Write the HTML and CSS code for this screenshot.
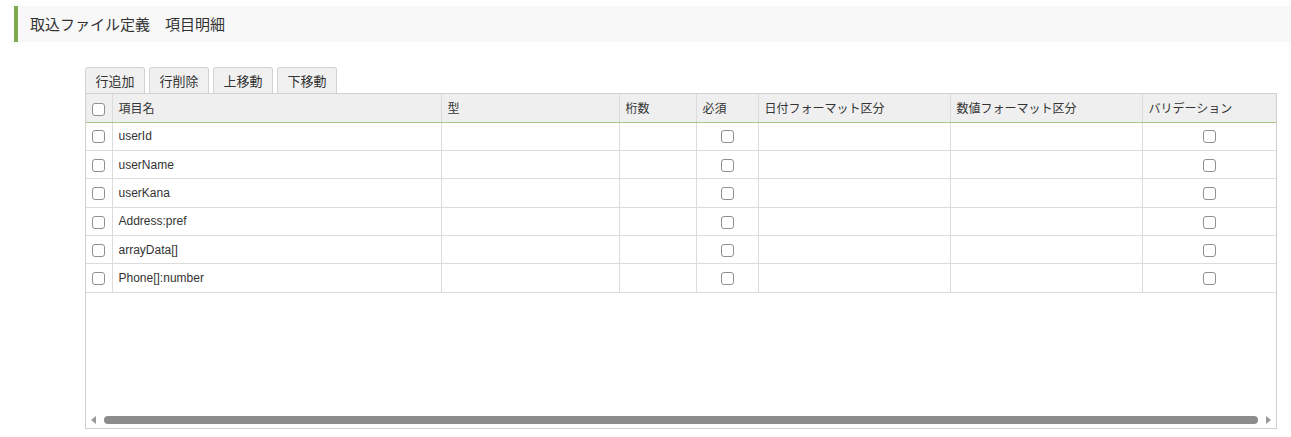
FILE: index.html
```html
<!DOCTYPE html>
<html lang="ja">
<head>
<meta charset="utf-8">
<title>取込ファイル定義 項目明細</title>
<link rel="stylesheet" href="styles.css">
</head>
<body>
<h1 class="page-title">取込ファイル定義　項目明細</h1>
<div class="content">
  <div class="toolbar">
    <button class="tab-btn">行追加</button>
    <button class="tab-btn">行削除</button>
    <button class="tab-btn">上移動</button>
    <button class="tab-btn">下移動</button>
  </div>
  <div class="grid">
    <table class="grid-table">
      <colgroup>
        <col class="c-cb"><col class="c-name"><col class="c-type"><col class="c-len"><col class="c-req"><col class="c-date"><col class="c-num"><col class="c-val">
      </colgroup>
      <thead>
        <tr>
          <th class="center"><span class="cb"></span></th>
          <th>項目名</th>
          <th>型</th>
          <th>桁数</th>
          <th>必須</th>
          <th>日付フォーマット区分</th>
          <th>数値フォーマット区分</th>
          <th>バリデーション</th>
        </tr>
      </thead>
      <tbody>
        <tr><td class="center"><span class="cb"></span></td><td>userId</td><td></td><td></td><td class="center"><span class="cb"></span></td><td></td><td></td><td class="center"><span class="cb"></span></td></tr>
        <tr><td class="center"><span class="cb"></span></td><td>userName</td><td></td><td></td><td class="center"><span class="cb"></span></td><td></td><td></td><td class="center"><span class="cb"></span></td></tr>
        <tr><td class="center"><span class="cb"></span></td><td>userKana</td><td></td><td></td><td class="center"><span class="cb"></span></td><td></td><td></td><td class="center"><span class="cb"></span></td></tr>
        <tr><td class="center"><span class="cb"></span></td><td>Address:pref</td><td></td><td></td><td class="center"><span class="cb"></span></td><td></td><td></td><td class="center"><span class="cb"></span></td></tr>
        <tr><td class="center"><span class="cb"></span></td><td>arrayData[]</td><td></td><td></td><td class="center"><span class="cb"></span></td><td></td><td></td><td class="center"><span class="cb"></span></td></tr>
        <tr><td class="center"><span class="cb"></span></td><td>Phone[]:number</td><td></td><td></td><td class="center"><span class="cb"></span></td><td></td><td></td><td class="center"><span class="cb"></span></td></tr>
      </tbody>
    </table>
    <div class="spacer"></div>
    <div class="hscroll">
      <span class="arrow arrow-left"></span>
      <span class="thumb"></span>
      <span class="arrow arrow-right"></span>
    </div>
  </div>
</div>
</body>
</html>
```
FILE: styles.css
```css
* { box-sizing: border-box; }
html, body { margin: 0; padding: 0; background: #fff; }
body {
  font-family: "Liberation Sans", "Noto Sans CJK JP", sans-serif;
  color: #333;
}
.page-title {
  margin: 6px 0 0 14px;
  height: 36px;
  line-height: 36px;
  border-left: 4px solid #7ea94f;
  background: #f8f8f8;
  padding-left: 12px;
  font-size: 15px;
  font-weight: normal;
  color: #333;
  font-family: "Noto Sans CJK JP", sans-serif;
}
.content {
  margin: 25px 0 0 85px;
  width: 1192px;
}
.toolbar {
  display: flex;
  gap: 4px;
  height: 26px;
}
.tab-btn {
  height: 26px;
  padding: 0 9.5px;
  border: 1px solid #d2d2d2;
  border-bottom: none;
  border-radius: 3px 3px 0 0;
  background: #f0f0f0;
  font-family: "Noto Sans CJK JP", sans-serif;
  font-size: 13px;
  color: #333;
  line-height: 24px;
  cursor: pointer;
}
.grid {
  height: 336px;
  border: 1px solid #d0d0d0;
  display: flex;
  flex-direction: column;
}
.grid-table {
  width: 1190px;
  border-collapse: collapse;
  table-layout: fixed;
}
.c-cb { width: 26px; }
.c-name { width: 329px; }
.c-type { width: 178px; }
.c-len { width: 77px; }
.c-req { width: 62px; }
.c-date { width: 192px; }
.c-num { width: 192px; }
.c-val { width: 134px; }
.grid-table th {
  height: 28px;
  background: #efefef;
  border-right: 1px solid #dcdcdc;
  border-bottom: 1px solid #a9c585;
  text-align: left;
  font-weight: normal;
  font-family: "Noto Sans CJK JP", sans-serif;
  font-size: 12px;
  color: #333;
  padding: 0 6px;
  white-space: nowrap;
}
.grid-table td {
  height: 28.4px;
  border-right: 1px solid #dcdcdc;
  border-bottom: 1px solid #dcdcdc;
  font-size: 12px;
  padding: 0 6px;
  color: #333;
}
.grid-table tr > :last-child { border-right: none; }
.grid-table .center { text-align: center; padding: 0; }
.cb {
  display: inline-block;
  width: 13px;
  height: 13px;
  border: 1px solid #909090;
  border-radius: 3px;
  background: #fff;
  vertical-align: middle;
}
.spacer { flex: 1; }
.hscroll {
  height: 14px;
  margin-bottom: 1px;
  display: flex;
  align-items: center;
  padding: 0 5px 0 5px;
}
.thumb {
  flex: 1;
  height: 8px;
  border-radius: 4px;
  background: #8c8c8c;
  margin: 0 8px 0 8px;
}
.arrow {
  width: 0;
  height: 0;
  border-top: 4px solid transparent;
  border-bottom: 4px solid transparent;
}
.arrow-left { border-right: 5px solid #999; }
.arrow-right { border-left: 5px solid #999; }
```
